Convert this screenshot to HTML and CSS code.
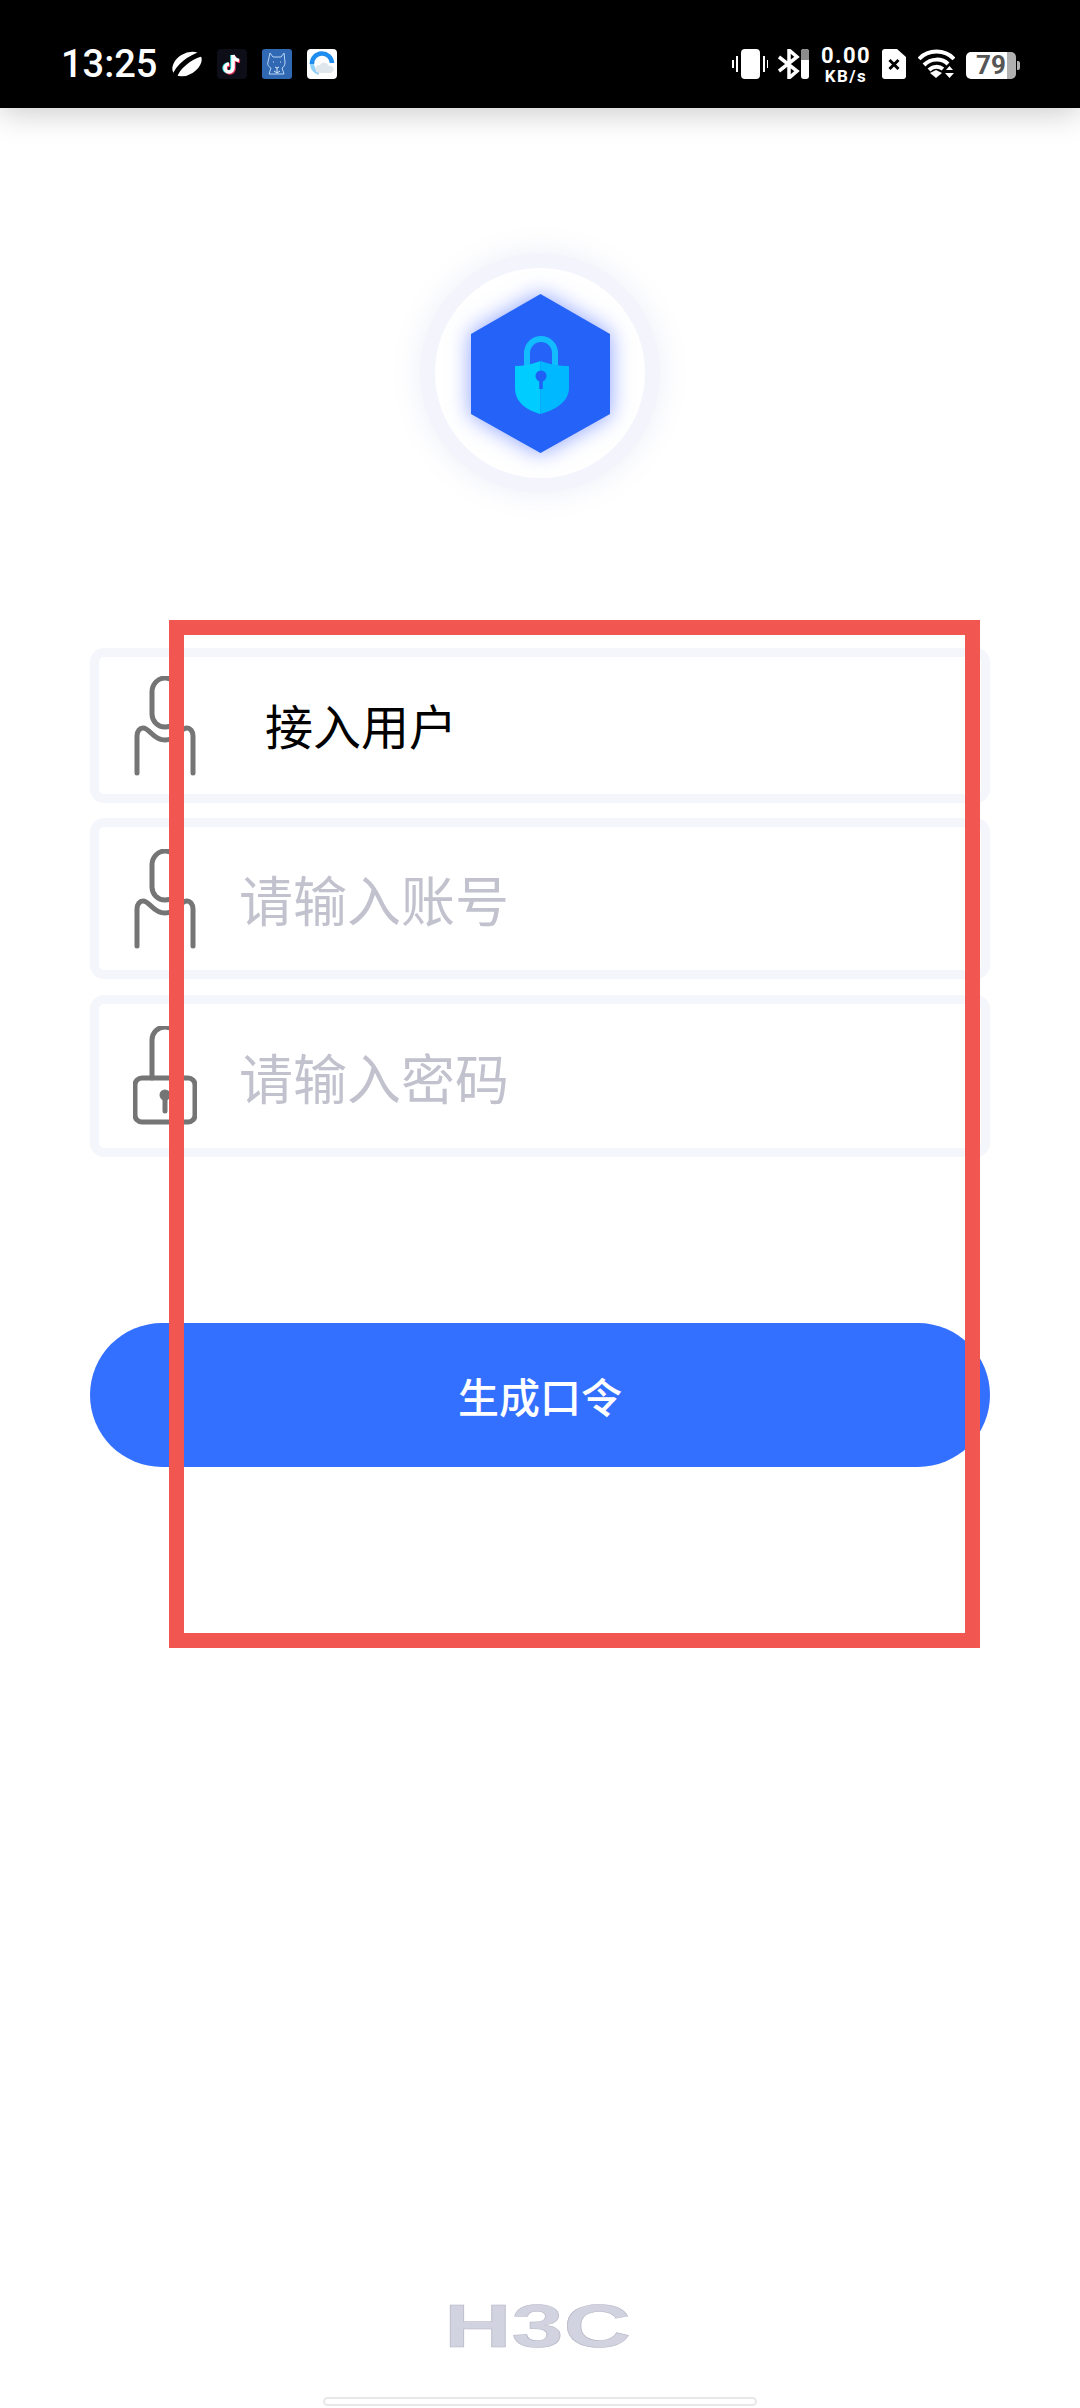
FILE: index.html
```html
<!DOCTYPE html>
<html lang="zh-CN">
<head>
    <meta charset="UTF-8">
    <meta name="viewport" content="width=device-width, initial-scale=1.0">
    <title>生成口令</title>
    <link rel="stylesheet" href="styles.css">
</head>
<body>
<div class="page">
    <header class="status-bar">
        <div class="status-left">
            <span class="time">13:25</span>
            <svg class="app-icon" viewBox="0 0 30 30">
                <g transform="rotate(-32 15 15)">
                    <ellipse cx="15" cy="15" rx="16" ry="10.500" fill="#fff"/>
                    <path d="M-2 19C6 12 22 11 32 14" stroke="#000" stroke-width="5" fill="none"/>
                </g>
            </svg>
            <svg class="app-icon" viewBox="0 0 30 30">
                <rect width="30" height="30" rx="4" fill="#0e0e18"/>
                <path d="M16 6v13a4 4 0 1 1-4-4M16 6c.5 3 3 5 6 5.500" stroke="#25e0e6" stroke-width="3.500" fill="none" transform="translate(-1 0)"/>
                <path d="M16 6v13a4 4 0 1 1-4-4M16 6c.5 3 3 5 6 5.500" stroke="#f0325a" stroke-width="3.500" fill="none" transform="translate(1 1)"/>
                <path d="M16 6v13a4 4 0 1 1-4-4M16 6c.5 3 3 5 6 5.500" stroke="#fff" stroke-width="3.500" fill="none"/>
            </svg>
            <svg class="app-icon" viewBox="0 0 30 30">
                <rect width="30" height="30" rx="3" fill="#3068b4"/>
                <path d="M8 4l3 4h8l3-4 1 9c0 3-1 5-3 6l2 6H7l2-6c-2-1-4-3-3-6z" stroke="#b8d4f4" stroke-width="1" fill="none"/>
                <path d="M11 13h1M18 13h1M13 18l2 1 2-1M15 19v5M12 22l3 2 3-2" stroke="#d6e6fa" stroke-width="1" fill="none"/>
            </svg>
            <svg class="app-icon" viewBox="0 0 30 30">
                <rect width="30" height="30" rx="4" fill="#fff"/>
                <path d="M5 15A10 10 0 0 1 25 14" stroke="#1f8df0" stroke-width="4.500" fill="none"/>
                <path d="M5 15c0 4 3 8 7 9" stroke="#8fd0fa" stroke-width="4" fill="none"/>
                <path d="M12 24a4 4 0 0 1 1-8 5 5 0 0 1 9 1 3.500 3.500 0 0 1 2 7z" fill="#dfe6ec"/>
            </svg>
        </div>
        <div class="status-right">
            <svg class="ic-vibrate" viewBox="0 0 36 30">
                <rect x="9" y="0" width="19" height="30" rx="4" fill="#fff"/>
                <path d="M1 11v8M5 7v16M32 7v16M36 11v8" stroke="#fff" stroke-width="2" fill="none"/>
            </svg>
            <svg class="ic-bluetooth" viewBox="0 0 31 30">
                <path d="M1 8l18 14-8 7V1l8 7L1 22" stroke="#fff" stroke-width="3.500" fill="none"/>
                <rect x="23" y="0" width="8" height="30" rx="3" fill="#fff"/>
                <path d="M23 11V3a3 3 0 0 1 3-3h2a3 3 0 0 1 3 3v8z" fill="#8c8c8c"/>
            </svg>
            <div class="speed">
                <span class="speed-num">0.00</span>
                <span class="speed-unit">KB/s</span>
            </div>
            <svg class="ic-sim" viewBox="0 0 24 30">
                <path d="M3 0h12l9 8v19a3 3 0 0 1-3 3H3a3 3 0 0 1-3-3V3a3 3 0 0 1 3-3z" fill="#fff"/>
                <path d="M7.500 11l9 9M16.500 11l-9 9" stroke="#000" stroke-width="3" fill="none"/>
            </svg>
            <svg class="ic-wifi" viewBox="0 0 37 30">
                <path d="M1 10C10 0 27 0 36 10" stroke="#fff" stroke-width="4" fill="none"/>
                <path d="M6 16C13 9 24 9 30 15" stroke="#fff" stroke-width="4" fill="none"/>
                <path d="M11 21c4-4 10-4 14-1" stroke="#fff" stroke-width="4" fill="none"/>
                <path d="M12 24l6-3 6 3-6 5z" fill="#fff"/>
                <path d="M28 21l3.500-4 3.500 4zM27 24h9l-4.500 5z" fill="#fff"/>
            </svg>
            <div class="battery"><span class="battery-text">79</span></div>
        </div>
    </header>

    <main class="content">
        <div class="logo">
            <svg class="logo-hex" viewBox="0 0 139 159">
                <polygon class="hex" points="69.500,0 139,40 139,120 69.500,159 0,120 0,40"/>
                <path d="M56 72V59a14 14 0 0 1 28 0v13" stroke="#12bcff" stroke-width="6" fill="none"/>
                <path d="M44 72c9 0 18-2 25.500-5v53C55 116 44 108 44 94z" fill="#00ccff"/>
                <path d="M98 72c-9 0-21-2-28.500-5v53C84 116 98 108 98 94z" fill="#00b8ff"/>
                <circle cx="70" cy="82" r="5.500" fill="#1f5ff5"/>
                <path d="M70 84v11" stroke="#1f5ff5" stroke-width="3.500"/>
            </svg>
        </div>

        <form class="login-form">
            <div class="field field-first">
                <svg class="field-icon" viewBox="0 0 64 100">
                    <path d="M19 16a13 14 0 0 1 26 0v22a13 13 0 0 1-26 0z"/>
                    <path d="M4 97V60c0-5 3-8 6-8 3 0 5 2 8 5 4 4 9 7 14 7s10-3 14-7c3-3 5-5 8-5 3 0 6 3 6 8v37"/>
                </svg>
                <span class="field-value">接入用户</span>
            </div>
            <div class="field">
                <svg class="field-icon" viewBox="0 0 64 100">
                    <path d="M19 16a13 14 0 0 1 26 0v22a13 13 0 0 1-26 0z"/>
                    <path d="M4 97V60c0-5 3-8 6-8 3 0 5 2 8 5 4 4 9 7 14 7s10-3 14-7c3-3 5-5 8-5 3 0 6 3 6 8v37"/>
                </svg>
                <input class="field-input" type="text" placeholder="请输入账号">
            </div>
            <div class="field field-last">
                <svg class="field-icon" viewBox="0 0 64 100">
                    <path d="M19 52V14a12 12 0 0 1 26 0v38"/>
                    <rect x="2" y="52" width="60" height="44" rx="7"/>
                    <circle class="keyhole" cx="32" cy="69" r="3"/>
                    <path d="M32 69v16"/>
                </svg>
                <input class="field-input" type="password" placeholder="请输入密码">
            </div>
            <button class="submit-btn" type="button">生成口令</button>
        </form>
    </main>

    <footer class="footer">
        <svg class="brand" viewBox="0 0 177 45">
            <text class="brand-text" x="-8" y="44" textLength="187" lengthAdjust="spacingAndGlyphs">H3C</text>
        </svg>
        <div class="home-bar"></div>
    </footer>

    <div class="highlight-box"></div>
</div>
</body>
</html>
```

FILE: styles.css
```css
body {
    margin: 0;
    background: #fff;
    font-family: "Noto Sans CJK SC", "Noto Sans", sans-serif;
}
.page {
    position: relative;
    display: flex;
    flex-direction: column;
    height: 2408px;
    overflow: hidden;
}

/* status bar */
.status-bar {
    position: relative;
    display: flex;
    justify-content: space-between;
    align-items: center;
    box-sizing: border-box;
    height: 108px;
    padding: 20px 60px 0 61px;
    background: #000;
    color: #fff;
    box-shadow: 0 4px 30px rgba(0,0,0,0.22);
}
.status-left, .status-right {
    display: flex;
    align-items: center;
}
.time {
    width: 92px;
    margin-right: 19px;
    font-family: Roboto, sans-serif;
    font-size: 38px;
    font-weight: 500;
    white-space: nowrap;
}
.app-icon {
    width: 30px;
    height: 30px;
    margin-right: 15px;
}
.app-icon:last-child {
    margin-right: 0;
}
.ic-vibrate {
    width: 36px;
    height: 30px;
    margin-right: 10px;
}
.ic-bluetooth {
    width: 31px;
    height: 30px;
    margin-right: 12px;
}
.speed {
    display: flex;
    flex-direction: column;
    align-items: center;
    width: 50px;
    margin-right: 11px;
    font-family: Roboto, sans-serif;
    font-weight: 700;
}
.speed-num {
    font-size: 22px;
    line-height: 23px;
    letter-spacing: 1.5px;
}
.speed-unit {
    font-size: 17px;
    line-height: 18px;
    letter-spacing: 1.5px;
}
.ic-sim {
    width: 24px;
    height: 30px;
    margin-right: 12px;
}
.ic-wifi {
    width: 37px;
    height: 30px;
    margin-right: 11px;
}
.battery {
    position: relative;
    display: flex;
    justify-content: center;
    width: 50px;
    height: 27px;
    margin: 2px 4px 0 0;
    border-radius: 5px;
    background: linear-gradient(to right, #fff 41px, #b0b0b0 41px);
}
.battery::after {
    content: "";
    position: absolute;
    left: 51px;
    top: 9px;
    width: 3px;
    height: 9px;
    border-radius: 0 2px 2px 0;
    background: #b0b0b0;
}
.battery-text {
    font-family: Roboto, sans-serif;
    font-size: 26px;
    font-weight: 700;
    line-height: 27px;
    color: #555;
}

/* logo */
.content {
    padding: 0 90px;
}
.logo {
    display: flex;
    justify-content: center;
    align-items: center;
    box-sizing: border-box;
    width: 240px;
    height: 240px;
    margin: 145px auto 155px;
    background: #fff;
    border: 15px solid #f3f4fc;
    border-radius: 50%;
    box-shadow: 0 0 30px rgba(110,120,200,0.12);
}
.logo-hex {
    width: 139px;
    height: 159px;
    overflow: visible;
    filter: drop-shadow(0 0 11px rgba(40,80,255,0.55));
}
.hex {
    fill: #2563f8;
}

/* form */
.field {
    display: flex;
    align-items: center;
    box-sizing: border-box;
    height: 161px;
    margin-bottom: 16px;
    padding-left: 34px;
    border: 9px solid #f5f6fb;
    border-radius: 14px;
}
.field-first {
    height: 155px;
    margin-bottom: 15px;
}
.field-last {
    height: 162px;
    margin-bottom: 0;
}
.field-icon {
    flex: none;
    width: 64px;
    height: 100px;
    fill: none;
    stroke: #757575;
    stroke-width: 5;
    stroke-linecap: round;
}
.keyhole {
    fill: #757575;
}
.field-value {
    margin: -3px 0 0 68px;
    font-size: 48px;
    color: #000;
}
.field-input {
    flex: 1;
    min-width: 0;
    margin: 0 0 0 42px;
    padding: 0;
    border: none;
    outline: none;
    background: none;
    font-family: inherit;
    font-size: 54px;
}
.field-input::placeholder {
    color: #c2c2ce;
    opacity: 1;
}
.submit-btn {
    display: block;
    width: 100%;
    height: 144px;
    margin-top: 166px;
    border: none;
    border-radius: 72px;
    background: #3370ff;
    color: #fff;
    font-family: inherit;
    font-size: 41px;
    font-weight: 500;
    cursor: pointer;
}

/* footer */
.footer {
    display: flex;
    flex-direction: column;
    align-items: center;
    margin-top: auto;
    padding-bottom: 2px;
}
.brand {
    width: 177px;
    height: 45px;
    overflow: visible;
}
.brand-text {
    font-family: "Liberation Sans", sans-serif;
    font-size: 62px;
    font-weight: 700;
    fill: #d2d3e0;
    stroke: #b4b5c4;
    stroke-width: 0.5;
}
.home-bar {
    box-sizing: border-box;
    width: 434px;
    height: 9px;
    margin-top: 49px;
    background: #fff;
    border: 2px solid #e8e8ea;
    border-radius: 5px;
}

/* red frame over the form */
.highlight-box {
    position: absolute;
    left: 169px;
    top: 620px;
    box-sizing: border-box;
    width: 811px;
    height: 1028px;
    border: 15px solid #f25650;
    pointer-events: none;
}
```
